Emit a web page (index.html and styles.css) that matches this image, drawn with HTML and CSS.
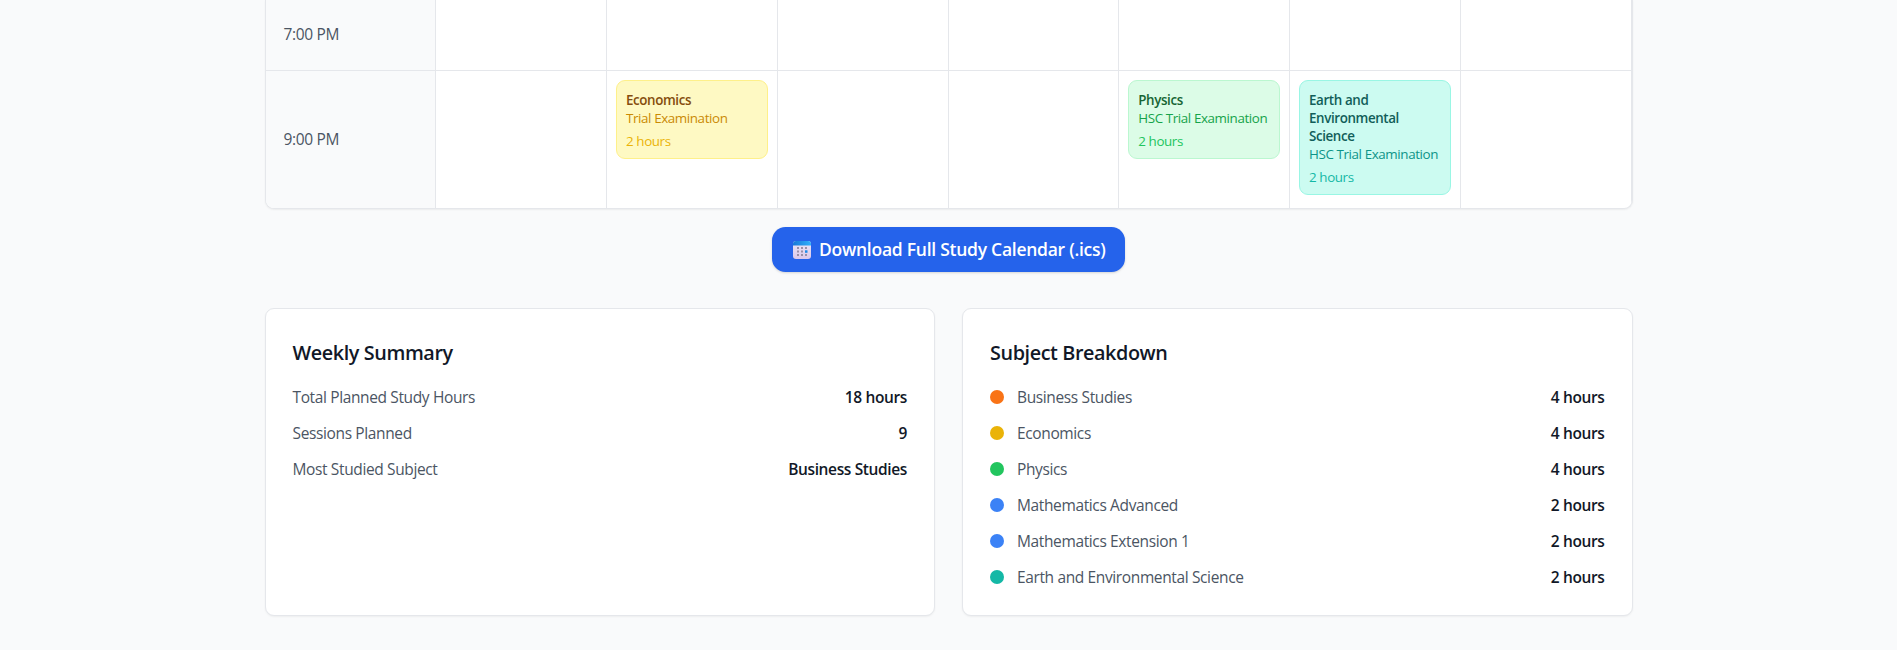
FILE: index.html
```html
<!DOCTYPE html>
<html lang="en">
<head>
<meta charset="utf-8">
<title>Study Planner</title>
<link rel="stylesheet" href="styles.css">
</head>
<body>
<main class="container">
  <section class="schedule">
    <div class="cell time evening"><span class="t">7:00 PM</span></div>
    <div class="cell"></div><div class="cell"></div><div class="cell"></div><div class="cell"></div><div class="cell"></div><div class="cell"></div><div class="cell"></div>
    <div class="cell time last"><span class="t">9:00 PM</span></div>
    <div class="cell last"></div>
    <div class="cell last">
      <div class="event yellow"><div class="name">Economics</div><div class="kind">Trial Examination</div><div class="length">2 hours</div></div>
    </div>
    <div class="cell last"></div>
    <div class="cell last"></div>
    <div class="cell last">
      <div class="event green"><div class="name">Physics</div><div class="kind">HSC Trial Examination</div><div class="length">2 hours</div></div>
    </div>
    <div class="cell last">
      <div class="event teal"><div class="name">Earth and Environmental Science</div><div class="kind">HSC Trial Examination</div><div class="length">2 hours</div></div>
    </div>
    <div class="cell last"></div>
  </section>

  <div class="actions">
    <button class="download">
      <svg class="calendar" viewBox="0 0 18 18" width="18" height="18">
        <defs>
          <linearGradient id="top" x1="0" x2="1"><stop offset="0" stop-color="#1a78d8"/><stop offset="1" stop-color="#2fb0fc"/></linearGradient>
          <linearGradient id="page" x1="0" y1="0" x2="0" y2="1"><stop offset="0" stop-color="#eae6f6"/><stop offset="1" stop-color="#dcc8ea"/></linearGradient>
        </defs>
        <rect width="18" height="18" rx="3" fill="url(#page)"/>
        <path d="M0 4.500V3a3 3 0 0 1 3-3h12a3 3 0 0 1 3 3v1.500z" fill="url(#top)"/>
        <g fill="#9a90a8">
          <rect x="4" y="6" width="2" height="2"/><rect x="8" y="6" width="2" height="2"/><rect x="12" y="6" width="2" height="2"/>
          <rect x="4" y="9.5" width="2" height="2"/><rect x="8" y="9.5" width="2" height="2"/>
          <rect x="4" y="13" width="2" height="2"/><rect x="8" y="13" width="2" height="2"/><rect x="12" y="13" width="2" height="2"/>
        </g>
        <rect x="12" y="9.3" width="2.5" height="2.5" fill="#1e8be8"/>
      </svg>
      <span class="caption">Download Full Study Calendar (.ics)</span>
    </button>
  </div>

  <div class="panels">
    <section class="panel">
      <h3><span>Weekly Summary</span></h3>
      <div class="rows">
        <div class="row"><span class="label">Total Planned Study Hours</span><span class="value">18 hours</span></div>
        <div class="row"><span class="label">Sessions Planned</span><span class="value">9</span></div>
        <div class="row"><span class="label">Most Studied Subject</span><span class="value">Business Studies</span></div>
      </div>
    </section>
    <section class="panel">
      <h3><span>Subject Breakdown</span></h3>
      <div class="rows">
        <div class="row"><i class="dot orange"></i><span class="label">Business Studies</span><span class="value">4 hours</span></div>
        <div class="row"><i class="dot gold"></i><span class="label">Economics</span><span class="value">4 hours</span></div>
        <div class="row"><i class="dot leaf"></i><span class="label">Physics</span><span class="value">4 hours</span></div>
        <div class="row"><i class="dot blue"></i><span class="label">Mathematics Advanced</span><span class="value">2 hours</span></div>
        <div class="row"><i class="dot blue"></i><span class="label">Mathematics Extension 1</span><span class="value">2 hours</span></div>
        <div class="row"><i class="dot sea"></i><span class="label">Earth and Environmental Science</span><span class="value">2 hours</span></div>
      </div>
    </section>
  </div>
</main>
</body>
</html>
```
FILE: styles.css
```css
* { box-sizing: border-box; }
html { font-size: 18px; }
body {
  margin: 0;
  height: 650px;
  overflow: hidden;
  background: #f9fafb;
  color: #111827;
  font-family: "Segoe UI", "Open Sans", "Noto Sans", sans-serif;
}
.container { width: 76rem; margin: 0 auto; }

.schedule {
  display: grid;
  grid-template-columns: repeat(8, minmax(0, 1fr));
  grid-template-rows: 71px 137px;
  height: 209px;
  background: #fff;
  border: 1px solid #e5e7eb;
  border-top: 0;
  border-radius: 0 0 9px 9px;
  box-shadow: 0 1px 2px rgba(0, 0, 0, .06);
  overflow: hidden;
}
.cell { padding: 9px; border-right: 1px solid #e5e7eb; border-bottom: 1px solid #e5e7eb; }
.cell.last { border-bottom: 0; }
.time {
  display: flex;
  align-items: center;
  padding: 0 18px;
  background: #f9fafb;
  color: #4b5563;
  font-size: 15.5px;
  line-height: 22.5px;
  letter-spacing: -.35px;
}
.evening { padding-bottom: 2px; }

.event {
  border: 1px solid;
  border-radius: 9px;
  padding: 10px 9px 8px;
  font-size: 13.4px;
  line-height: 18px;
  letter-spacing: -.4px;
}
.name { font-weight: 600; }
.kind { white-space: nowrap; }
.length { margin-top: 4.5px; }
.yellow { background: #fef9c3; border-color: #fef08a; color: #ca8a04; }
.yellow .name { color: #854d0e; }
.yellow .length { color: #eab308; }
.green { background: #dcfce7; border-color: #bbf7d0; color: #16a34a; }
.green .name { color: #166534; }
.green .length { color: #22c55e; }
.teal { background: #ccfbf1; border-color: #99f6e4; color: #0d9488; }
.teal .name { color: #115e59; }
.teal .length { color: #14b8a6; }

.actions { display: flex; justify-content: center; margin: 18px 0 36px; }
.download {
  display: flex;
  align-items: center;
  gap: 8px;
  width: 353px;
  height: 45px;
  padding: 0 18px 0 21px;
  border: 0;
  border-radius: 13.5px;
  background: #2563eb;
  color: #fff;
  font: 600 17.5px/27px "Segoe UI", "Open Sans", "Noto Sans", sans-serif;
  letter-spacing: -.26px;
  white-space: nowrap;
  box-shadow: 0 1px 3px rgba(0, 0, 0, .1), 0 1px 2px rgba(0, 0, 0, .06);
}
.calendar { flex: none; }

.panels { display: grid; grid-template-columns: 1fr 1fr; gap: 27px; }
.panel {
  height: 307.5px;
  padding: 27px;
  background: #fff;
  border: 1px solid #e5e7eb;
  border-radius: 9px;
  box-shadow: 0 1px 2px rgba(0, 0, 0, .05);
}
h3 { margin: 0 0 17px; padding-top: 1px; font-size: 19.8px; line-height: 31.5px; font-weight: 600; letter-spacing: -.4px; }
.rows { display: grid; gap: 13.5px; }
.row { display: flex; align-items: center; font-size: 15.5px; line-height: 22.5px; letter-spacing: -.37px; }
.label { color: #4b5563; }
.value { margin-left: auto; font-weight: 600; }
.dot { width: 14px; height: 14px; margin-right: 13px; border-radius: 50%; }
.orange { background: #f97316; }
.gold { background: #eab308; }
.leaf { background: #22c55e; }
.blue { background: #3b82f6; }
.sea { background: #14b8a6; }
```
